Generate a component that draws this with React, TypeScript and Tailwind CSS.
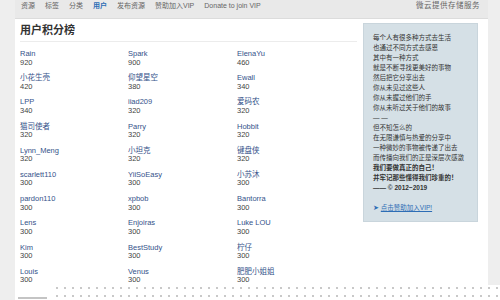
const navItems = ['资源', '标签', '分类', '用户', '发布资源', '赞助加入VIP', 'Donate to join VIP'];

const users: [string, number][] = [
  ['Rain', 920], ['Spark', 900], ['ElenaYu', 460],
  ['小花生壳', 420], ['仰望星空', 380], ['Ewall', 340],
  ['LPP', 340], ['iiad209', 320], ['爱码农', 320],
  ['猫司使者', 320], ['Parry', 320], ['Hobbit', 320],
  ['Lynn_Meng', 320], ['小坦克', 320], ['键盘侠', 320],
  ['scarlett110', 300], ['YiiSoEasy', 300], ['小苏沐', 300],
  ['pardon110', 300], ['xpbob', 300], ['Bantorra', 300],
  ['Lens', 300], ['Enjoiras', 300], ['Luke LOU', 300],
  ['Kim', 300], ['BestStudy', 300], ['柠仔', 300],
  ['Louis', 300], ['Venus', 300], ['肥肥小姐姐', 300],
];

const poem = [
  '每个人有很多种方式去生活',
  '也通过不同方式去感恩',
  '其中有一种方式',
  '就是不断寻找更美好的事物',
  '然后把它分享出去',
  '你从未见过这些人',
  '你从未握过他们的手',
  '你从未听过关于他们的故事',
  '— —',
  '但不知怎么的',
  '在无限谦慎与热爱的分享中',
  '一种微妙的事物被传递了出去',
  '而传播向我们的正是深层次感激',
];

export default function App() {
  return (
    <div className="relative h-[300px] w-[500px] overflow-hidden bg-[#eeeeee] font-['Liberation_Sans','Noto_Sans_CJK_SC',sans-serif] text-[#333]">
      <div className="ml-[15px] mr-[12px] flex h-full flex-col bg-white">
        <nav className="flex h-[19px] items-start justify-between border-b border-[#dcdcdc] bg-[#e9e9e9] pl-[6px] pr-[8px] pt-[1px] text-[7px] leading-[10px] text-[#666]">
          <div className="flex gap-[10px]">
            {navItems.map((n) => (
              <span key={n} className={n === '用户' ? 'font-bold text-[#2d6db5]' : ''}>
                {n}
              </span>
            ))}
          </div>
          <span className="text-[7.5px] tracking-[0.5px]">微云提供存储服务</span>
        </nav>

        <div className="flex">
          <main className="w-[342px] pl-[5px]">
            <h1 className="h-[23px] border-b border-[#ececec] pt-[5px] text-[11px] font-bold leading-[13px] text-[#333]">用户积分榜</h1>
            <div className="grid grid-cols-[108px_109px_108px] pt-[8px]">
              {users.map(([name, score]) => (
                <div key={name} className="h-[24.2px] text-[7.5px] leading-[8.5px]">
                  <div className="text-[#34528a]">{name}</div>
                  <div className="text-[#444]">{score}</div>
                </div>
              ))}
            </div>
          </main>

          <aside className="ml-[6px] mt-[4px] h-[199px] w-[115px] border border-[#c9d5dc] bg-[#d5e0e6] px-[9px] pt-[9px] text-[6.5px] leading-[10px] text-[#333]">
            {poem.map((l, i) => (
              <div key={i}>{l}</div>
            ))}
            <div className="font-bold">我们要做真正的自己！</div>
            <div className="font-bold">并牢记那些懂得我们珍重的！</div>
            <div className="font-bold">—— © 2012~2019</div>
            <div className="mt-[10px] text-[#2d6db5]">
              ➤ <span className="underline">点击赞助加入VIP!</span>
            </div>
          </aside>
        </div>
      </div>

      <div className="absolute left-[53px] top-[285px] h-[15px] w-[447px] bg-white bg-[radial-gradient(circle,#b5b5b5_0.6px,transparent_1px)] bg-[length:8px_8px] bg-[position:0_-1px]" />
      <div className="absolute left-[18px] top-[297px] h-[2px] w-[29px] bg-[#c4c4c4]" />
    </div>
  );
}
